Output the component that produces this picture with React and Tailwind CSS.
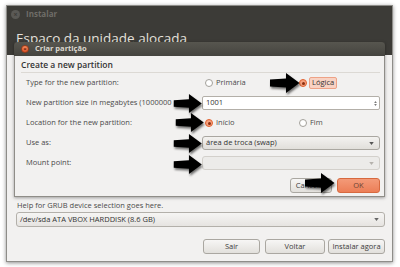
import React from "react";

function Arrow({ className }) {
  return (
    <svg
      viewBox="0 0 30 20"
      className={"absolute z-20 drop-shadow-[1.5px_2px_1.2px_rgba(0,0,0,0.55)] " + className}
    >
      <polygon points="0,6.5 16,5.5 16,0 29.5,10 16,20 16,14.5 0,13.5" fill="#000" />
    </svg>
  );
}

function Radio({ checked }) {
  return (
    <span
      className={
        "inline-flex items-center justify-center w-[8px] h-[8px] rounded-full border " +
        (checked ? "border-[#e0622f] bg-[#f6a17f]" : "border-[#a3a09a] bg-white")
      }
    >
      {checked && <span className="w-[3px] h-[3px] rounded-full bg-[#8a2f10]" />}
    </span>
  );
}

function Btn({ children, className }) {
  return (
    <div
      className={
        "h-[15px] flex items-center justify-center rounded-[3px] border border-[#aaa7a1] bg-gradient-to-b from-[#f7f6f5] to-[#e2e0dc] text-[#3c3c3c] text-[7.5px] " +
        className
      }
    >
      {children}
    </div>
  );
}

function Tri({ color }) {
  return (
    <svg viewBox="0 0 6 4" className="w-[5px] h-[3px]">
      <polygon points="0,0 6,0 3,4" fill={color} />
    </svg>
  );
}

export default function App() {
  return (
    <div
      className="relative w-[400px] h-[267px] bg-white overflow-hidden pt-[5px] pl-[6px]"
      style={{ fontFamily: "'Open Sans', 'DejaVu Sans', sans-serif" }}
    >
      <div className="w-[387px] h-[257px] flex flex-col border border-[#8e8d89] shadow-[0_1px_4px_rgba(0,0,0,0.45)] bg-[#f2f1f0]">
        {/* title bar */}
        <div className="h-[16px] bg-[#3c3b37] flex items-center pl-[4px] gap-[6px]">
          <span className="w-[9px] h-[9px] rounded-full bg-[#5a5955] flex items-center justify-center text-[#3c3b37] text-[7px] leading-none font-bold">
            ×
          </span>
          <span className="text-[8px] font-bold text-[#6f6d68]">Instalar</span>
        </div>
        {/* header */}
        <div className="h-[33px] bg-[#3c3b37] pl-[9px] pt-[7px]">
          <div className="text-[13.5px] leading-[18px] text-[#e4e1dc]">Espaço da unidade alocada</div>
        </div>
        {/* body */}
        <div className="flex-1 flex flex-col">
          {/* dialog */}
          <div className="relative z-10 -mt-[13px] mx-[7px] h-[155px] flex flex-col shadow-[0_1px_3px_rgba(0,0,0,0.35)]">
            <div className="h-[14px] bg-gradient-to-b from-[#57564f] to-[#45443f] rounded-t-[4px] flex items-center pl-[7px] gap-[6px]">
              <span className="w-[8px] h-[8px] rounded-full bg-gradient-to-b from-[#f48a5c] to-[#e0552a] border border-[#9b3a17] flex items-center justify-center text-[#5a1d08] text-[6px] leading-none font-bold">
                ×
              </span>
              <span className="text-[7.5px] font-bold text-[#dcd8d0]">Criar partição</span>
            </div>
            <div className="flex-1 bg-[#f2f1f0] border-x border-b border-[#8f8d88] pl-[6px] pr-[4px] flex flex-col">
              <div className="h-[17px] flex items-end pb-[1px] border-b border-[#dcd9d4]">
                <span className="text-[8.5px] leading-[12px] font-semibold text-[#333]">Create a new partition</span>
              </div>
              <div className="pl-[5px] flex flex-col text-[7.5px] text-[#4a4a4a]">
                <div className="h-[20px] flex items-center">
                  <div className="w-[177px]">Type for the new partition:</div>
                  <div className="flex items-center">
                    <div className="w-[96px] pl-[2px] flex items-center gap-[3px]">
                      <Radio />
                      <span>Primária</span>
                    </div>
                    <div className="flex items-center gap-[2px]">
                      <Radio checked />
                      <span className="px-[2px] h-[12px] flex items-center rounded-[2px] bg-[#f8d2c3] border border-[#eea286] text-[#333]">
                        Lógica
                      </span>
                    </div>
                  </div>
                </div>
                <div className="h-[20px] flex items-center">
                  <div className="w-[177px] whitespace-nowrap overflow-hidden">New partition size in megabytes (1000000 </div>
                  <div className="w-[179px] h-[14px] bg-white border border-[#b3afa8] rounded-[2px] flex items-center pl-[3px] pr-[2px] justify-between">
                    <span className="text-[#333]">1001</span>
                    <span className="flex flex-col items-center gap-[1px]">
                      <svg viewBox="0 0 4 3" className="w-[3px] h-[2px]"><polygon points="0,3 4,3 2,0" fill="#777" /></svg>
                      <svg viewBox="0 0 4 3" className="w-[3px] h-[2px]"><polygon points="0,0 4,0 2,3" fill="#777" /></svg>
                    </span>
                  </div>
                </div>
                <div className="h-[20px] flex items-center">
                  <div className="w-[177px]">Location for the new partition:</div>
                  <div className="flex items-center">
                    <div className="w-[96px] pl-[2px] flex items-center gap-[3px]">
                      <Radio checked />
                      <span>Início</span>
                    </div>
                    <div className="flex items-center gap-[3px]">
                      <Radio />
                      <span>Fim</span>
                    </div>
                  </div>
                </div>
                <div className="h-[20px] flex items-center">
                  <div className="w-[177px]">Use as:</div>
                  <div className="w-[179px] h-[14px] bg-gradient-to-b from-[#f3f2f0] to-[#e1dfdb] border border-[#aaa7a1] rounded-[3px] flex items-center pl-[3px] pr-[5px] justify-between">
                    <span className="text-[#333]">área de troca (swap)</span>
                    <Tri color="#555" />
                  </div>
                </div>
                <div className="h-[20px] flex items-center">
                  <div className="w-[177px]">Mount point:</div>
                  <div className="w-[179px] h-[14px] bg-[#ecebe9] border border-[#d3d0cb] rounded-[3px] flex items-center pl-[3px] pr-[5px] justify-end">
                    <Tri color="#b5b2ad" />
                  </div>
                </div>
              </div>
              <div className="mt-[5px] flex justify-end gap-[5px]">
                <Btn className="w-[42px]">Cancelar</Btn>
                <Btn className="w-[43px] !from-[#f39a78] !to-[#ec7e57] !border-[#d7693f] !text-[#6b4436]">OK</Btn>
              </div>
            </div>
          </div>
          {/* below dialog */}
          <div className="pl-[9px] pr-[7px] flex flex-col">
            <div className="h-[13px] mt-[2px] flex items-center pl-[1px] text-[7.5px] text-[#4a4a4a]">
              Help for GRUB device selection goes here.
            </div>
            <div className="h-[15px] bg-gradient-to-b from-[#f6f5f4] to-[#e6e4e1] border border-[#b3b0aa] rounded-[3px] flex items-center pl-[3px] pr-[5px] justify-between text-[7.5px] text-[#333]">
              <span>/dev/sda ATA VBOX HARDDISK (8.6 GB)</span>
              <Tri color="#666" />
            </div>
            <div className="mt-[12px] flex justify-end">
              <Btn className="w-[57px]">Sair</Btn>
              <Btn className="w-[60px] ml-[5px]">Voltar</Btn>
              <Btn className="w-[57px] ml-[3px]">Instalar agora</Btn>
            </div>
          </div>
        </div>
      </div>

      {/* annotation arrows */}
      <Arrow className="left-[270px] top-[73px] w-[30px] h-[20px]" />
      <Arrow className="left-[173px] top-[94px] w-[30px] h-[19px]" />
      <Arrow className="left-[175px] top-[113px] w-[30px] h-[19px]" />
      <Arrow className="left-[173px] top-[134px] w-[30px] h-[19px]" />
      <Arrow className="left-[173px] top-[155px] w-[30px] h-[19px]" />
      <Arrow className="left-[305px] top-[172px] w-[30px] h-[22px]" />
    </div>
  );
}
